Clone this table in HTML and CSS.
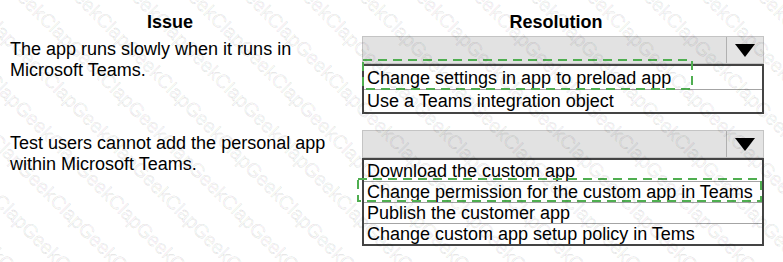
FILE: index.html
```html
<!DOCTYPE html>
<html lang="en">
<head>
<meta charset="utf-8">
<title>Issue / Resolution</title>
<link rel="stylesheet" href="styles.css">
</head>
<body>
<div class="sheet">
  <div class="head head-issue">Issue</div>
  <div class="head head-res">Resolution</div>

  <div class="issue">The app runs slowly when it runs in<br>Microsoft Teams.</div>
  <div class="dropdown">
    <div class="select">
      <span class="field"></span>
      <span class="btn"><svg width="20" height="13" viewBox="0 0 20 13"><polygon points="0,0 20,0 10,13" fill="#000"/></svg></span>
    </div>
    <ul class="list list-tall">
      <li>Change settings in app to preload app</li>
      <li>Use a Teams integration object</li>
    </ul>
    <svg class="answer answer-1" width="331" height="31" viewBox="0 0 331 31"><rect x="1" y="1" width="329" height="29" fill="none" stroke="#4fae50" stroke-width="2" stroke-dasharray="9 6"/></svg>
  </div>

  <div class="issue row-b">Test users cannot add the personal app<br>within Microsoft Teams.</div>
  <div class="dropdown row-b">
    <div class="select">
      <span class="field"></span>
      <span class="btn"><svg width="20" height="13" viewBox="0 0 20 13"><polygon points="0,0 20,0 10,13" fill="#000"/></svg></span>
    </div>
    <ul class="list">
      <li>Download the custom app</li>
      <li>Change permission for the custom app in Teams</li>
      <li>Publish the customer app</li>
      <li>Change custom app setup policy in Tems</li>
    </ul>
    <svg class="answer answer-2" width="405" height="24" viewBox="0 0 405 24"><rect x="1" y="1" width="403" height="22" fill="none" stroke="#4fae50" stroke-width="2" stroke-dasharray="9 6"/></svg>
  </div>
</div>

<div class="wm" aria-hidden="true">
  <div class="wm-inner">
    <div class="wm-line">ClapGeekClapGeekClapGeekClapGeekClapGeekClapGeekClapGeekClapGeekClapGeekClapGeekClapGeekClapGeekClapGeekClapGeekClapGeekClapGeekClapGeekClapGeekClapGeek</div>
    <div class="wm-line">ClapGeekClapGeekClapGeekClapGeekClapGeekClapGeekClapGeekClapGeekClapGeekClapGeekClapGeekClapGeekClapGeekClapGeekClapGeekClapGeekClapGeekClapGeekClapGeek</div>
    <div class="wm-line">ClapGeekClapGeekClapGeekClapGeekClapGeekClapGeekClapGeekClapGeekClapGeekClapGeekClapGeekClapGeekClapGeekClapGeekClapGeekClapGeekClapGeekClapGeekClapGeek</div>
    <div class="wm-line">ClapGeekClapGeekClapGeekClapGeekClapGeekClapGeekClapGeekClapGeekClapGeekClapGeekClapGeekClapGeekClapGeekClapGeekClapGeekClapGeekClapGeekClapGeekClapGeek</div>
    <div class="wm-line">ClapGeekClapGeekClapGeekClapGeekClapGeekClapGeekClapGeekClapGeekClapGeekClapGeekClapGeekClapGeekClapGeekClapGeekClapGeekClapGeekClapGeekClapGeekClapGeek</div>
    <div class="wm-line">ClapGeekClapGeekClapGeekClapGeekClapGeekClapGeekClapGeekClapGeekClapGeekClapGeekClapGeekClapGeekClapGeekClapGeekClapGeekClapGeekClapGeekClapGeekClapGeek</div>
    <div class="wm-line">ClapGeekClapGeekClapGeekClapGeekClapGeekClapGeekClapGeekClapGeekClapGeekClapGeekClapGeekClapGeekClapGeekClapGeekClapGeekClapGeekClapGeekClapGeekClapGeek</div>
    <div class="wm-line">ClapGeekClapGeekClapGeekClapGeekClapGeekClapGeekClapGeekClapGeekClapGeekClapGeekClapGeekClapGeekClapGeekClapGeekClapGeekClapGeekClapGeekClapGeekClapGeek</div>
    <div class="wm-line">ClapGeekClapGeekClapGeekClapGeekClapGeekClapGeekClapGeekClapGeekClapGeekClapGeekClapGeekClapGeekClapGeekClapGeekClapGeekClapGeekClapGeekClapGeekClapGeek</div>
    <div class="wm-line">ClapGeekClapGeekClapGeekClapGeekClapGeekClapGeekClapGeekClapGeekClapGeekClapGeekClapGeekClapGeekClapGeekClapGeekClapGeekClapGeekClapGeekClapGeekClapGeek</div>
    <div class="wm-line">ClapGeekClapGeekClapGeekClapGeekClapGeekClapGeekClapGeekClapGeekClapGeekClapGeekClapGeekClapGeekClapGeekClapGeekClapGeekClapGeekClapGeekClapGeekClapGeek</div>
    <div class="wm-line">ClapGeekClapGeekClapGeekClapGeekClapGeekClapGeekClapGeekClapGeekClapGeekClapGeekClapGeekClapGeekClapGeekClapGeekClapGeekClapGeekClapGeekClapGeekClapGeek</div>
    <div class="wm-line">ClapGeekClapGeekClapGeekClapGeekClapGeekClapGeekClapGeekClapGeekClapGeekClapGeekClapGeekClapGeekClapGeekClapGeekClapGeekClapGeekClapGeekClapGeekClapGeek</div>
    <div class="wm-line">ClapGeekClapGeekClapGeekClapGeekClapGeekClapGeekClapGeekClapGeekClapGeekClapGeekClapGeekClapGeekClapGeekClapGeekClapGeekClapGeekClapGeekClapGeekClapGeek</div>
    <div class="wm-line">ClapGeekClapGeekClapGeekClapGeekClapGeekClapGeekClapGeekClapGeekClapGeekClapGeekClapGeekClapGeekClapGeekClapGeekClapGeekClapGeekClapGeekClapGeekClapGeek</div>
    <div class="wm-line">ClapGeekClapGeekClapGeekClapGeekClapGeekClapGeekClapGeekClapGeekClapGeekClapGeekClapGeekClapGeekClapGeekClapGeekClapGeekClapGeekClapGeekClapGeekClapGeek</div>
    <div class="wm-line">ClapGeekClapGeekClapGeekClapGeekClapGeekClapGeekClapGeekClapGeekClapGeekClapGeekClapGeekClapGeekClapGeekClapGeekClapGeekClapGeekClapGeekClapGeekClapGeek</div>
    <div class="wm-line">ClapGeekClapGeekClapGeekClapGeekClapGeekClapGeekClapGeekClapGeekClapGeekClapGeekClapGeekClapGeekClapGeekClapGeekClapGeekClapGeekClapGeekClapGeekClapGeek</div>
    <div class="wm-line">ClapGeekClapGeekClapGeekClapGeekClapGeekClapGeekClapGeekClapGeekClapGeekClapGeekClapGeekClapGeekClapGeekClapGeekClapGeekClapGeekClapGeekClapGeekClapGeek</div>
    <div class="wm-line">ClapGeekClapGeekClapGeekClapGeekClapGeekClapGeekClapGeekClapGeekClapGeekClapGeekClapGeekClapGeekClapGeekClapGeekClapGeekClapGeekClapGeekClapGeekClapGeek</div>
  </div>
</div>
</body>
</html>
```

FILE: styles.css
```css
html, body {
  margin: 0;
  padding: 0;
  background: #ffffff;
  overflow: hidden;
}

body {
  width: 783px;
  height: 262px;
  position: relative;
  font-family: "Liberation Sans", Arial, sans-serif;
  font-size: 18px;
  color: #000000;
}

.sheet {
  display: grid;
  grid-template-columns: 320px 402px;
  column-gap: 32px;
  padding: 12px 0 0 10px;
  align-items: start;
}

.head {
  font-weight: bold;
  line-height: 20px;
  text-align: center;
  margin-bottom: 4px;
}

.head-res {
  padding-right: 14px;
}

.issue {
  line-height: 21px;
  padding-top: 3px;
}

.row-b {
  margin-top: 16px;
}

.dropdown {
  position: relative;
}

.select {
  display: flex;
  height: 28px;
  box-sizing: border-box;
  border: 1px solid #c4c4c4;
  background: #e2e2e2;
}

.field {
  flex: 1;
}

.btn {
  width: 36px;
  border-left: 1px solid #b0b0b0;
  background: #e4e4e4;
  display: flex;
  align-items: center;
  justify-content: center;
  padding-top: 1px;
}

.btn svg {
  display: block;
}

.list {
  list-style: none;
  margin: 0;
  padding: 1px 0 0 3px;
  border: 2px solid #444444;
  background: #ffffff;
  line-height: 20px;
}

.list li {
  border-bottom: 1px solid #a4a4a4;
  margin-left: -3px;
  padding-left: 3px;
  white-space: nowrap;
}

.list li:last-child {
  border-bottom: none;
}

.list-tall {
  line-height: 22px;
}

.answer {
  position: absolute;
  display: block;
}

.answer-1 {
  left: 0;
  top: 23px;
}

.answer-2 {
  left: -5px;
  top: 48px;
}

/* watermark */
.wm {
  position: absolute;
  left: 0;
  top: 0;
  width: 783px;
  height: 262px;
  overflow: hidden;
  pointer-events: none;
}

.wm-inner {
  position: absolute;
  left: 400px;
  top: -400px;
  width: 800px;
  padding-top: 3px;
  transform-origin: 0 0;
  transform: rotate(45deg) skewX(-45deg);
}

.wm-line {
  height: 40.3px;
  line-height: 40.3px;
  white-space: nowrap;
  text-indent: 74px;
  transform: skewX(45deg);
  font-family: "Liberation Sans", Arial, sans-serif;
  font-size: 19.3px;
  color: rgba(0, 0, 0, 0.04);
  -webkit-text-stroke: 0.5px rgba(0, 0, 0, 0.12);
}
```
